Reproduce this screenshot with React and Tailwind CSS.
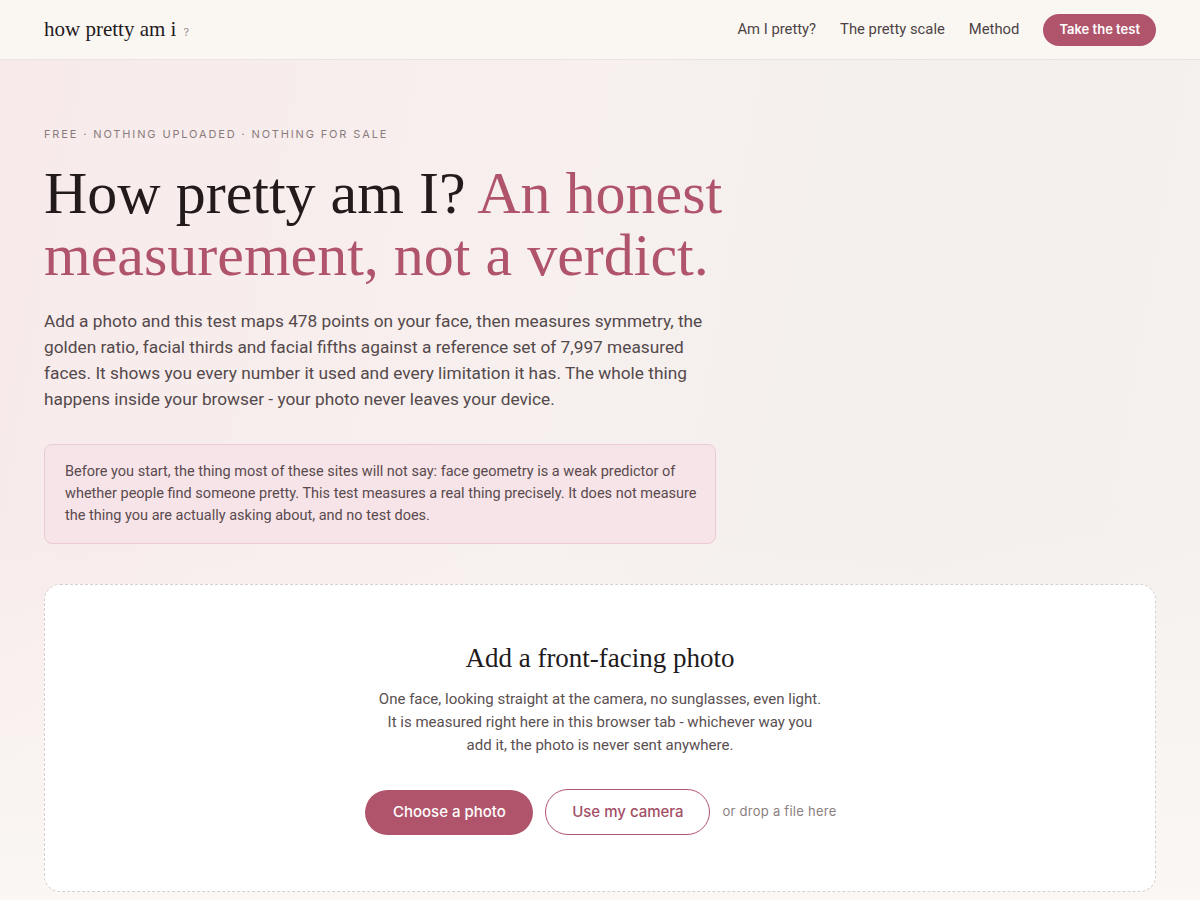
import React from 'react';

const serif = "font-['Liberation_Serif','DejaVu_Serif',serif]";

function Header() {
    return (
        <header className="h-[60px] bg-[#faf7f3] border-b border-[#ebe4df] flex items-center justify-between px-[44px]">
            <div className={`${serif} text-[21px] text-[#231a1c] flex items-baseline gap-[7px]`}>
                how pretty am i
                <span className="font-['Inter',sans-serif] text-[11px] text-[#9a8f8f]">?</span>
            </div>
            <nav className="flex items-center text-[14.8px] text-[#4d4345] font-['Roboto',sans-serif]">
                <a className="mr-[24px]">Am I pretty?</a>
                <a className="mr-[24px]">The pretty scale</a>
                <a className="mr-[24px]">Method</a>
                <button className="h-[32px] px-[16px] rounded-full bg-[#b0546b] text-white text-[13px] font-semibold font-['Inter',sans-serif]">
                    Take the test
                </button>
            </nav>
        </header>
    );
}

function Hero() {
    return (
        <section className="px-[44px] pt-[66px]">
            <p className="text-[11px] tracking-[0.17em] text-[#8a7c7d] uppercase">
                Free · Nothing uploaded · Nothing for sale
            </p>
            <h1 className={`${serif} mt-[19px] text-[60px] leading-[62px] text-[#221a1b] max-w-[740px]`}>
                How pretty am I? <span className="text-[#b0546b]">An honest measurement, not a verdict.</span>
            </h1>
            <p className="mt-[22px] w-[672px] font-['Roboto',sans-serif] text-[17.3px] leading-[26px] text-[#54494b]">
                Add a photo and this test maps 478 points on your face, then measures symmetry, the golden ratio, facial thirds and facial fifths against a reference set of 7,997 measured faces. It shows you every number it used and every limitation it has. The whole thing happens inside your browser - your photo never leaves your device.
            </p>
            <div className="mt-[32px] w-[672px] rounded-[8px] border border-[#eacbd3] bg-[#f6e4e8] pl-[20px] pr-[14px] py-[16px] font-['Roboto',sans-serif] text-[14.5px] leading-[22px] text-[#5a4a4e]">
                Before you start, the thing most of these sites will not say: face geometry is a weak predictor of whether people find someone pretty. This test measures a real thing precisely. It does not measure the thing you are actually asking about, and no test does.
            </div>
        </section>
    );
}

function Upload() {
    return (
        <section className="px-[44px] pt-[40px] pb-[8px]">
            <div className="rounded-[16px] border border-dashed border-[#d9cfca] bg-white flex flex-col items-center pt-[53px] pb-[56px]">
                <h2 className={`${serif} text-[27px] text-[#221a1b]`}>Add a front-facing photo</h2>
                <p className="mt-[10px] w-[448px] text-center font-['Roboto',sans-serif] text-[15px] leading-[23px] text-[#5a4f51]">
                    One face, looking straight at the camera, no sunglasses, even light. It is measured right here in this browser tab - whichever way you add it, the photo is never sent anywhere.
                </p>
                <div className="mt-[32px] flex items-center gap-[12px] pl-[2px]">
                    <button className="h-[45px] w-[168px] rounded-full bg-[#b0546b] text-white text-[15px] font-medium">
                        Choose a photo
                    </button>
                    <button className="h-[46px] w-[165px] rounded-full border border-[#b0546b] bg-white text-[#a24e65] text-[15px] font-medium">
                        Use my camera
                    </button>
                    <span className="text-[13px] text-[#8a7f80] tracking-[0.02em]">or drop a file here</span>
                </div>
            </div>
        </section>
    );
}

export default function App() {
    return (
        <div className="min-h-[900px] font-['Inter',sans-serif] bg-[#faf7f4]">
            <Header />
            <div className="bg-[linear-gradient(100deg,#f8eaeb_0%,#f7f0ee_45%,#f2efec_75%,#f4f1ee_100%)]">
                <div className="bg-[linear-gradient(180deg,transparent_0%,transparent_55%,#faf7f4_100%)]">
                    <Hero />
                    <Upload />
                </div>
            </div>
        </div>
    );
}
